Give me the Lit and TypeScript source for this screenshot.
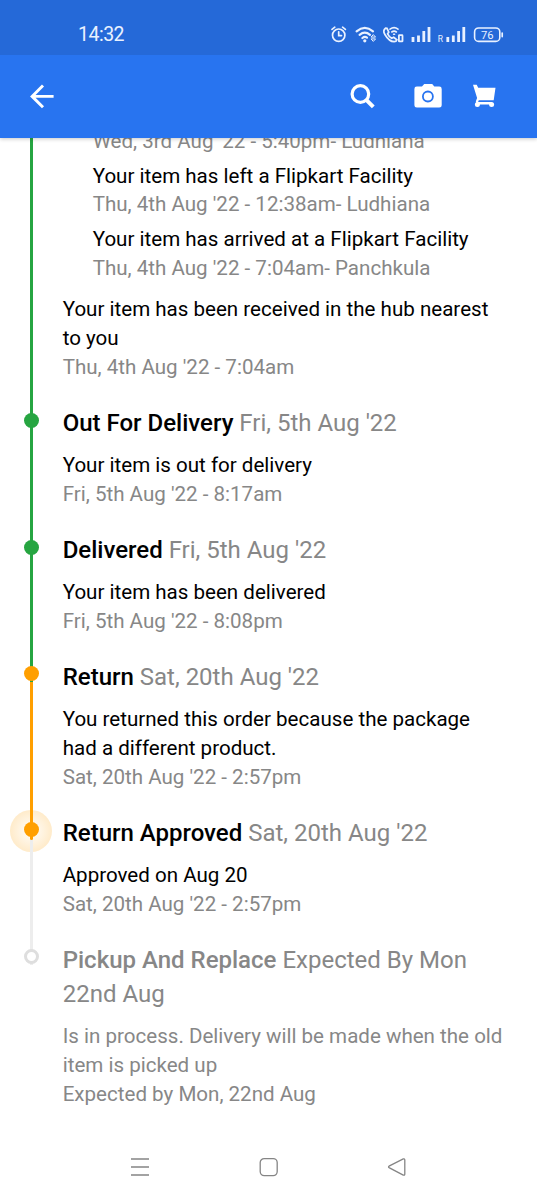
import { LitElement, html, css, svg, nothing } from "lit";
import { customElement, property } from "lit/decorators.js";

interface Entry {
  lines: string[];
  date: string;
}

interface Step {
  title: string;
  when: string[];
  dot: string;
  line: string;
  entries: Entry[];
}

const transit: Entry[] = [
  { lines: [], date: "Wed, 3rd Aug '22 - 5:40pm- Ludhiana" },
  { lines: ["Your item has left a Flipkart Facility"], date: "Thu, 4th Aug '22 - 12:38am- Ludhiana" },
  { lines: ["Your item has arrived at a Flipkart Facility"], date: "Thu, 4th Aug '22 - 7:04am- Panchkula" },
];

const steps: Step[] = [
  {
    title: "Out For Delivery", when: ["Fri, 5th Aug '22"], dot: "green", line: "green",
    entries: [{ lines: ["Your item is out for delivery"], date: "Fri, 5th Aug '22 - 8:17am" }],
  },
  {
    title: "Delivered", when: ["Fri, 5th Aug '22"], dot: "green", line: "green",
    entries: [{ lines: ["Your item has been delivered"], date: "Fri, 5th Aug '22 - 8:08pm" }],
  },
  {
    title: "Return", when: ["Sat, 20th Aug '22"], dot: "orange", line: "orange",
    entries: [{
      lines: ["You returned this order because the package", "had a different product."],
      date: "Sat, 20th Aug '22 - 2:57pm",
    }],
  },
  {
    title: "Return Approved", when: ["Sat, 20th Aug '22"], dot: "orange current", line: "pale",
    entries: [{ lines: ["Approved on Aug 20"], date: "Sat, 20th Aug '22 - 2:57pm" }],
  },
  {
    title: "Pickup And Replace", when: ["Expected By Mon", "22nd Aug"], dot: "hollow", line: "",
    entries: [{
      lines: ["Is in process. Delivery will be made when the old", "item is picked up"],
      date: "Expected by Mon, 22nd Aug",
    }],
  },
];

@customElement("status-bar")
export class StatusBar extends LitElement {
  static styles = css`
    :host { display: block; height: 55px; flex: none; background: #2569d8; color: #e9f1ff; position: relative; z-index: 2; }
    .row { display: flex; justify-content: space-between; padding: 22px 33px 0 78px; }
    .time { font: 400 19.5px/25px Roboto, sans-serif; letter-spacing: -0.5px; }
    svg { display: block; }
    text { font-family: Roboto, sans-serif; fill: #e9f1ff; }
  `;
  render() {
    const bars = (x: number) => svg`
      <path d="M${x} 20v-5M${x + 5.5} 20v-6.5M${x + 10.8} 20v-11M${x + 16} 20v-15" stroke-width="2.8" stroke-linecap="butt"/>`;
    return html`<div class="row">
      <span class="time">14:32</span>
      <svg width="174" height="25" viewBox="0 0 174 25" fill="none" stroke="#e9f1ff" stroke-width="1.7" stroke-linecap="round">
        <circle cx="8.7" cy="13.2" r="6.2"/>
        <path d="M8.7 9.8v3.8h2.8M2 7.4l2.8-2.2M15.4 7.4l-2.8-2.2"/>
        <path d="M26.6 9.3q8.2-6.8 16.4 0M29.6 12.8q5.2-4.2 10.4 0M32.4 16q2.4-2 4.6-.4" stroke-width="2.2"/>
        <circle cx="34.8" cy="18.8" r="1.6" fill="#e9f1ff" stroke="none"/>
        <path d="m41.3 14.8 2-2.2 2 2.2zM41.3 17.2l2 2.2 2-2.2z" stroke-width="1"/>
        <path d="M55.5 6.2c-1.6 1.2-2.6 3-.6 6.3 2.5 4.2 6 7.2 9.2 7.2 1.4 0 2.5-1 2.8-2l-3.2-2.4-2 1c-1.8-1-3.3-2.8-4.1-4.5l1.2-1.7-1.8-3.8z" stroke-width="1.7"/>
        <path d="M60 7.2q4.2-3.2 8 0M61.8 10q2.3-1.8 4.6 0M63.6 12.3h1" stroke-width="1.6"/>
        <rect x="68.9" y="13.2" width="3.6" height="6.2" rx=".5" stroke-width="1.8"/>
        ${bars(83)}
        <text x="107.7" y="20" font-size="8.5" stroke="none">R</text>
        ${bars(117.8)}
        <rect x="144.6" y="6" width="25.2" height="13.4" rx="4" stroke-width="1.6"/>
        <path d="M172.2 11v3.6" stroke-width="1.7"/>
        <text x="157.2" y="16.7" font-size="11.2" text-anchor="middle" stroke="none">76</text>
      </svg>
    </div>`;
  }
}

@customElement("app-bar")
export class AppBar extends LitElement {
  static styles = css`
    :host {
      display: flex; align-items: center; flex: none; height: 83px; box-sizing: border-box;
      padding: 0 40px 1px 29px; background: #2874f0; position: relative; z-index: 1;
      box-shadow: 0 1px 4px rgba(0, 0, 0, 0.22);
    }
    svg { display: block; }
    .search { margin-left: auto; }
    .camera { margin-left: 39px; }
    .cart { margin-left: 30px; }
  `;
  render() {
    return html`
      <svg width="26" height="26" viewBox="0 0 26 26" fill="none" stroke="#fff" stroke-width="2.9">
        <path d="M24.6 13.4H3M14 2.5 3.1 13.4 14 24.3"/>
      </svg>
      <svg class="search" width="25" height="26" viewBox="0 0 25 26" fill="none" stroke="#fff">
        <circle cx="10.4" cy="11" r="8.3" stroke-width="3.2"/>
        <path d="m16.3 16.9 7 7" stroke-width="4"/>
      </svg>
      <svg class="camera" width="28" height="26" viewBox="0 0 28 26">
        <path fill="#fff" d="M2.8 3.6H8l2.2-2.5h8l2.1 2.5h5A2.4 2.4 0 0 1 27.7 6v16.2a2.4 2.4 0 0 1-2.4 2.4H2.8a2.4 2.4 0 0 1-2.4-2.4V6a2.4 2.4 0 0 1 2.4-2.4z"/>
        <circle cx="13.9" cy="13.5" r="5" fill="none" stroke="#2874f0" stroke-width="1.8"/>
      </svg>
      <svg class="cart" width="25" height="26" viewBox="0 0 25 26">
        <path fill="#fff" d="M1 1.8h3.7l1.5 3h17.3l-1.8 12.4H6.8l-.7 1.8h13.7v2.4H5.2L3.8 18.5l1.3-3.6z"/>
        <circle cx="5.4" cy="21.4" r="2.5" fill="#fff"/>
        <circle cx="19.6" cy="21.4" r="2.5" fill="#fff"/>
      </svg>`;
  }
}

@customElement("tracking-step")
export class TrackingStep extends LitElement {
  @property({ attribute: false }) step!: Step;

  static styles = css`
    :host { display: grid; grid-template-columns: 62.7px 1fr; }
    .rail { display: flex; flex-direction: column; align-items: flex-start; position: relative; }
    .line { position: relative; z-index: 1; width: 3px; flex: 1; margin: 22px 0 -22px 30px; }
    .line.green { background: #26a541; }
    .line.orange { background: #ff9f00; }
    .line.pale { background: #ededed; }
    .dot { position: absolute; z-index: 2; left: 23.8px; top: 6.5px; width: 15px; height: 15px; border-radius: 50%; box-sizing: border-box; }
    .dot.green { background: #26a541; }
    .dot.orange { background: #ff9f00; }
    .dot.hollow { background: #fff; border: 3px solid #dedede; }
    .halo {
      position: absolute; left: 10px; top: -5.6px; width: 42px; height: 42px; border-radius: 50%;
      background: radial-gradient(circle closest-side, #fffaf2 20%, #ffebca 100%);
    }
    .tail { position: absolute; z-index: 2; left: 30px; top: 18px; width: 3px; height: 6px; background: #ff9f00; border-radius: 0 0 2px 2px; }
    .title { font-size: 24px; line-height: 34px; color: #878787; white-space: nowrap; }
    .title b { font-weight: 500; color: #000; }
    .text { padding: 11.2px 0 24.2px; font-size: 20.57px; line-height: 28.8px; white-space: nowrap; color: #000; }
    .date { color: #878787; }
    .future b, .future .text { color: #878787; }
  `;
  render() {
    const s = this.step;
    return html`
      <div class="rail">
        ${s.dot.includes("current") ? html`<i class="halo"></i><i class="tail"></i>` : nothing}
        <i class="dot ${s.dot}"></i>
        ${s.line ? html`<div class="line ${s.line}"></div>` : nothing}
      </div>
      <div class=${s.dot === "hollow" ? "future" : ""}>
        <div class="title"><b>${s.title}</b> ${s.when.map((w, i) => html`${i ? html`<br>` : nothing}${w}`)}</div>
        <div class="text">
          ${s.entries.map((e) => html`${e.lines.map((l) => html`<div>${l}</div>`)}<div class="date">${e.date}</div>`)}
        </div>
      </div>`;
  }
}

@customElement("app-root")
export class AppRoot extends LitElement {
  static styles = css`
    :host {
      display: flex; flex-direction: column; width: 537px; height: 1200px; overflow: hidden;
      background: #fff; font-family: Roboto, sans-serif;
    }
    main { flex: 1; min-height: 0; overflow: hidden; }
    .transit {
      display: grid; grid-template-columns: 62.7px 1fr; margin-top: -11.3px;
      font-size: 20.57px; line-height: 28.8px; white-space: nowrap; color: #000;
    }
    .line { width: 3px; margin: 0 0 -22px 30px; background: #26a541; }
    .stops { display: flex; flex-direction: column; gap: 6.2px; padding: 0 0 12px 30px; }
    .date { color: #878787; }
    .hub { padding-bottom: 24.6px; }
    nav { display: flex; justify-content: space-between; flex: none; height: 66px; padding: 0 130px; align-items: center; }
    nav svg { display: block; }
  `;
  render() {
    return html`
      <status-bar></status-bar>
      <app-bar></app-bar>
      <main>
        <section class="transit">
          <div class="line"></div>
          <div>
            <div class="stops">
              ${transit.map((e) => html`<div>${e.lines.map((l) => html`<div>${l}</div>`)}<div class="date">${e.date}</div></div>`)}
            </div>
            <div class="hub">
              <div>Your item has been received in the hub nearest</div>
              <div>to you</div>
              <div class="date">Thu, 4th Aug '22 - 7:04am</div>
            </div>
          </div>
        </section>
        ${steps.map((s) => html`<tracking-step .step=${s}></tracking-step>`)}
      </main>
      <nav>
        <svg width="20" height="20" viewBox="0 0 20 20" stroke="#858585" stroke-width="1.4"><path d="M1 2h18M1 10h18M1 18h18"/></svg>
        <svg width="20" height="20" viewBox="0 0 20 20" fill="none" stroke="#858585" stroke-width="1.3"><rect x="1.2" y="1.6" width="17" height="17" rx="4"/></svg>
        <svg width="20" height="20" viewBox="0 0 20 20" fill="none" stroke="#858585" stroke-width="1.3" stroke-linejoin="round"><path d="M16.3 1.9 2 9.2q-.9.7 0 1.4l14.3 7.5q1.5.5 1.5-1V3q0-1.6-1.5-1.1z"/></svg>
      </nav>`;
  }
}
